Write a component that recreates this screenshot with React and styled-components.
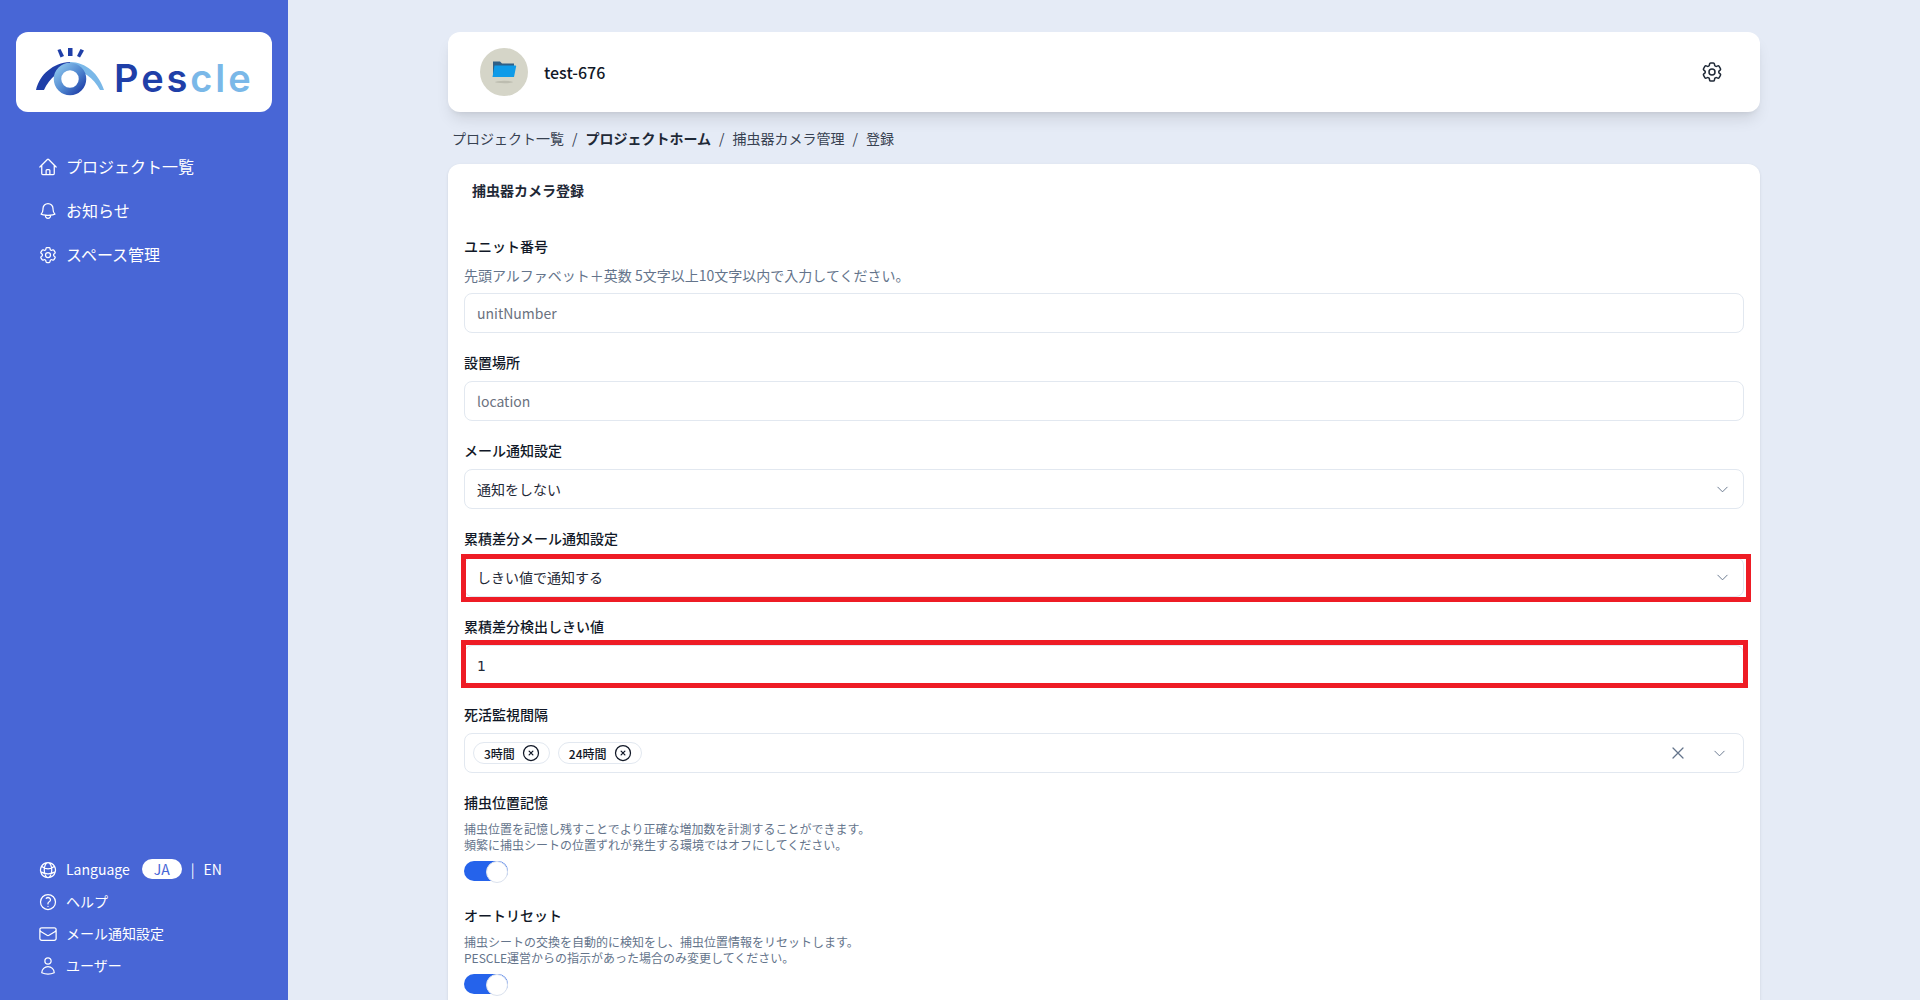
import React from 'react';
import styled, { createGlobalStyle } from 'styled-components';
import {
  HiOutlineHome,
  HiOutlineBell,
  HiOutlineCog6Tooth,
  HiOutlineGlobeAlt,
  HiOutlineQuestionMarkCircle,
  HiOutlineEnvelope,
  HiOutlineUser,
  HiOutlineXCircle,
  HiOutlineXMark,
  HiOutlineChevronDown,
} from 'react-icons/hi2';

const GlobalStyle = createGlobalStyle`
  html, body {
    margin: 0;
    height: 100%;
    overflow: hidden;
  }
  body {
    font-family: 'Noto Sans CJK JP', 'Noto Sans', sans-serif;
    background: #e5ebf6;
    color: #111827;
  }
  * {
    box-sizing: border-box;
  }
`;

const App = () => {
  return (
    <>
      <GlobalStyle />
      <Page>
        <Sidebar>
          <LogoCard>
            <EyeLogo />
            <LogoText>
              Pes<LogoTextLight>cle</LogoTextLight>
            </LogoText>
          </LogoCard>
          <MainNav>
            <NavItem>
              <HiOutlineHome size={20} />
              プロジェクト一覧
            </NavItem>
            <NavItem>
              <HiOutlineBell size={20} />
              お知らせ
            </NavItem>
            <NavItem>
              <HiOutlineCog6Tooth size={20} />
              スペース管理
            </NavItem>
          </MainNav>
          <BottomNav>
            <BottomItem>
              <HiOutlineGlobeAlt size={20} />
              Language
              <LangPill>JA</LangPill>
              <LangDivider>|</LangDivider>
              <span>EN</span>
            </BottomItem>
            <BottomItem>
              <HiOutlineQuestionMarkCircle size={20} />
              ヘルプ
            </BottomItem>
            <BottomItem>
              <HiOutlineEnvelope size={20} />
              メール通知設定
            </BottomItem>
            <BottomItem>
              <HiOutlineUser size={20} />
              ユーザー
            </BottomItem>
          </BottomNav>
        </Sidebar>
        <Main>
          <Content>
            <HeaderCard>
              <ProjectInfo>
                <Avatar>
                  <FolderIcon />
                </Avatar>
                <ProjectName>test-676</ProjectName>
              </ProjectInfo>
              <HiOutlineCog6Tooth size={24} color="#1f2937" />
            </HeaderCard>
            <Breadcrumb>
              <span>プロジェクト一覧</span>
              <Slash>/</Slash>
              <CrumbActive>プロジェクトホーム</CrumbActive>
              <Slash>/</Slash>
              <span>捕虫器カメラ管理</span>
              <Slash>/</Slash>
              <span>登録</span>
            </Breadcrumb>
            <FormCard>
              <FormTitle>捕虫器カメラ登録</FormTitle>
              <Form>
                <Field>
                  <Label>ユニット番号</Label>
                  <Hint>先頭アルファベット＋英数 5文字以上10文字以内で入力してください。</Hint>
                  <TextInput placeholder="unitNumber" readOnly />
                </Field>
                <Field>
                  <Label>設置場所</Label>
                  <TextInput placeholder="location" readOnly />
                </Field>
                <Field>
                  <Label>メール通知設定</Label>
                  <SelectBox>
                    通知をしない
                    <HiOutlineChevronDown size={15} color="#64748b" />
                  </SelectBox>
                </Field>
                <Field>
                  <Label>累積差分メール通知設定</Label>
                  <Marked>
                    <SelectBox>
                      しきい値で通知する
                      <HiOutlineChevronDown size={15} color="#64748b" />
                    </SelectBox>
                    <RedMark $top={3} $right={7} $bottom={5} $left={3} />
                  </Marked>
                </Field>
                <Field>
                  <Label>累積差分検出しきい値</Label>
                  <Marked>
                    <NumberInput value="1" readOnly />
                    <RedMark $top={5} $right={4} $bottom={3} $left={3} />
                  </Marked>
                </Field>
                <Field>
                  <Label>死活監視間隔</Label>
                  <MultiSelect>
                    <Chip>
                      3時間
                      <HiOutlineXCircle size={20} color="#111827" />
                    </Chip>
                    <Chip>
                      24時間
                      <HiOutlineXCircle size={20} color="#111827" />
                    </Chip>
                    <MultiActions>
                      <HiOutlineXMark size={20} color="#64748b" />
                      <HiOutlineChevronDown size={15} color="#64748b" />
                    </MultiActions>
                  </MultiSelect>
                </Field>
                <Field>
                  <Label>捕虫位置記憶</Label>
                  <SmallHint>
                    捕虫位置を記憶し残すことでより正確な増加数を計測することができます。
                    <br />
                    頻繁に捕虫シートの位置ずれが発生する環境ではオフにしてください。
                  </SmallHint>
                  <Toggle />
                </Field>
                <Field>
                  <Label>オートリセット</Label>
                  <SmallHint>
                    捕虫シートの交換を自動的に検知をし、捕虫位置情報をリセットします。
                    <br />
                    PESCLE運営からの指示があった場合のみ変更してください。
                  </SmallHint>
                  <Toggle />
                </Field>
              </Form>
            </FormCard>
          </Content>
        </Main>
      </Page>
    </>
  );
};

export default App;

const EyeLogo = () => (
  <svg width="70" height="50" viewBox="0 0 70 50">
    <defs>
      <linearGradient id="ring" x1="0" y1="0" x2="1" y2="1">
        <stop offset="0" stopColor="#8cc4ec" />
        <stop offset="0.55" stopColor="#4f86cf" />
        <stop offset="1" stopColor="#1f3fa8" />
      </linearGradient>
    </defs>
    <path d="M21.5 2 L24.5 1 L28 8 L24.5 9.5 Z" fill="#1f3fa8" />
    <rect x="32" y="0" width="4.5" height="8" fill="#1f3fa8" />
    <path d="M44.5 1 L48 2.5 L44 9.5 L41 8 Z" fill="#1f3fa8" />
    <path d="M0 42 C4 26 17 15 34 14 L34 20 C25 21 13 30 8 42 Z" fill="#1f3fa8" />
    <path d="M34 14 C50 14 63 26 68 42 L64 42 C58 30 46 22 34 20 Z" fill="#7ab8e8" />
    <circle cx="34" cy="31" r="12.5" fill="none" stroke="url(#ring)" strokeWidth="7.5" />
  </svg>
);

const FolderIcon = () => (
  <svg width="26" height="24" viewBox="0 0 26 24">
    <ellipse cx="13" cy="22" rx="9" ry="1.2" fill="#bdbdb0" />
    <path d="M2 1.5 H9 L11 3.5 H23 V16 H2 Z" fill="#2f5f86" />
    <path d="M3.5 5.5 H24.5 Q25.5 5.5 25 7 L23 17 H1.5 Z" fill="#0f9be8" />
  </svg>
);

const Page = styled.div`
  display: flex;
  height: 100vh;
`;

const Sidebar = styled.aside`
  display: flex;
  flex-direction: column;
  flex: 0 0 288px;
  padding: 32px 16px 22px;
  background: #4866d6;
  color: #ffffff;
`;

const LogoCard = styled.div`
  display: flex;
  align-items: flex-end;
  gap: 8px;
  height: 80px;
  padding: 0 0 14px 20px;
  background: #ffffff;
  border-radius: 12px;
`;

const LogoText = styled.span`
  margin-bottom: 4px;
  font-family: 'Inter', sans-serif;
  font-size: 38px;
  font-weight: 600;
  line-height: 32px;
  letter-spacing: 2.9px;
  color: #1f3fa8;
`;

const LogoTextLight = styled.span`
  color: #7ab8e8;
`;

const MainNav = styled.nav`
  display: flex;
  flex-direction: column;
  gap: 20px;
  margin-top: 43px;
  padding-left: 22px;
`;

const NavItem = styled.a`
  display: flex;
  align-items: center;
  gap: 8px;
  height: 24px;
  padding-bottom: 2px;
  font-size: 16px;

  svg {
    margin-top: 2px;
  }
`;

const BottomNav = styled.nav`
  display: flex;
  flex-direction: column;
  gap: 8px;
  margin-top: auto;
  padding-left: 22px;
`;

const BottomItem = styled.a`
  display: flex;
  align-items: center;
  gap: 8px;
  height: 24px;
  padding-bottom: 2px;
  font-size: 14px;

  svg {
    margin-top: 2px;
  }
`;

const LangPill = styled.span`
  display: flex;
  align-items: center;
  justify-content: center;
  width: 40px;
  height: 20px;
  margin-left: 4px;
  background: #ffffff;
  border-radius: 10px;
  color: #4866d6;
`;

const LangDivider = styled.span`
  margin: 0 1px;
`;

const Main = styled.main`
  flex: 1;
  min-width: 0;
  overflow: hidden;
  padding: 32px 160px;
`;

const Content = styled.div`
  width: 1312px;
`;

const HeaderCard = styled.header`
  display: flex;
  align-items: center;
  justify-content: space-between;
  height: 80px;
  padding: 0 36px 0 32px;
  background: #ffffff;
  border-radius: 12px;
  box-shadow: 0 10px 15px -3px rgba(0, 0, 0, 0.1), 0 4px 6px -4px rgba(0, 0, 0, 0.1);
`;

const ProjectInfo = styled.div`
  display: flex;
  align-items: center;
  gap: 16px;
`;

const Avatar = styled.div`
  display: flex;
  align-items: center;
  justify-content: center;
  width: 48px;
  height: 48px;
  background: #d5d5c8;
  border-radius: 50%;
`;

const ProjectName = styled.span`
  font-size: 16px;
  font-weight: 500;
  color: #111827;
`;

const Breadcrumb = styled.div`
  display: flex;
  align-items: center;
  gap: 7px;
  height: 52px;
  padding: 0 4px;
  font-size: 14px;
  color: #374151;
`;

const CrumbActive = styled.span`
  font-weight: 700;
  color: #1f2937;
`;

const Slash = styled.span`
  margin: 0 1px;
  color: #374151;
`;

const FormCard = styled.section`
  padding: 17px 16px 40px;
  background: #ffffff;
  border-radius: 12px 12px 0 0;
  box-shadow: 0 1px 3px rgba(0, 0, 0, 0.1);
`;

const FormTitle = styled.h2`
  height: 20px;
  margin: 0 0 36px;
  padding-left: 8px;
  font-size: 14px;
  font-weight: 700;
  line-height: 18px;
  color: #1f2937;
`;

const Form = styled.form`
  display: flex;
  flex-direction: column;
  gap: 20px;
`;

const Field = styled.div`
  display: flex;
  flex-direction: column;
  gap: 8px;
`;

const Label = styled.label`
  height: 20px;
  font-size: 14px;
  font-weight: 500;
  line-height: 18px;
  color: #111827;
`;

const Hint = styled.p`
  margin: 0;
  font-size: 14px;
  line-height: 20px;
  color: #64748b;
`;

const SmallHint = styled.p`
  margin: 0;
  font-size: 12px;
  line-height: 16px;
  color: #64748b;
`;

const TextInput = styled.input`
  width: 100%;
  height: 40px;
  padding: 0 12px;
  background: #ffffff;
  border: 1px solid #e2e8f0;
  border-radius: 8px;
  font-family: inherit;
  font-size: 14px;
  color: #1f2937;
  outline: none;

  &::placeholder {
    color: #6b7280;
  }
`;

const NumberInput = styled(TextInput)`
  font-family: 'DejaVu Sans', sans-serif;
  font-size: 14px;
  padding-top: 2px;
`;

const SelectBox = styled.div`
  display: flex;
  align-items: center;
  justify-content: space-between;
  height: 40px;
  padding: 0 13px 0 12px;
  background: #ffffff;
  border: 1px solid #e2e8f0;
  border-radius: 8px;
  font-size: 14px;
  color: #1f2937;
`;

const Marked = styled.div`
  position: relative;
`;

const RedMark = styled.div`
  position: absolute;
  top: -${(props) => props.$top}px;
  right: -${(props) => props.$right}px;
  bottom: -${(props) => props.$bottom}px;
  left: -${(props) => props.$left}px;
  border: 5px solid #ee1c25;
  pointer-events: none;
`;

const MultiSelect = styled.div`
  display: flex;
  align-items: center;
  gap: 8px;
  height: 40px;
  padding: 0 16px 0 8px;
  background: #ffffff;
  border: 1px solid #e2e8f0;
  border-radius: 8px;
`;

const Chip = styled.span`
  display: flex;
  align-items: center;
  gap: 6px;
  height: 22px;
  padding: 0 8px 0 10px;
  border: 1px solid #e2e8f0;
  border-radius: 11px;
  font-size: 12px;
  font-weight: 500;
  color: #111827;
`;

const MultiActions = styled.div`
  display: flex;
  align-items: center;
  gap: 24px;
  margin-left: auto;
`;

const Toggle = styled.div`
  position: relative;
  width: 44px;
  height: 20px;
  margin-bottom: 5px;
  background: #2563eb;
  border-radius: 10px;

  &::after {
    content: '';
    position: absolute;
    top: 0;
    right: 0;
    width: 20px;
    height: 20px;
    background: #ffffff;
    border: 1px solid #dbe2ee;
    border-radius: 50%;
  }
`;
